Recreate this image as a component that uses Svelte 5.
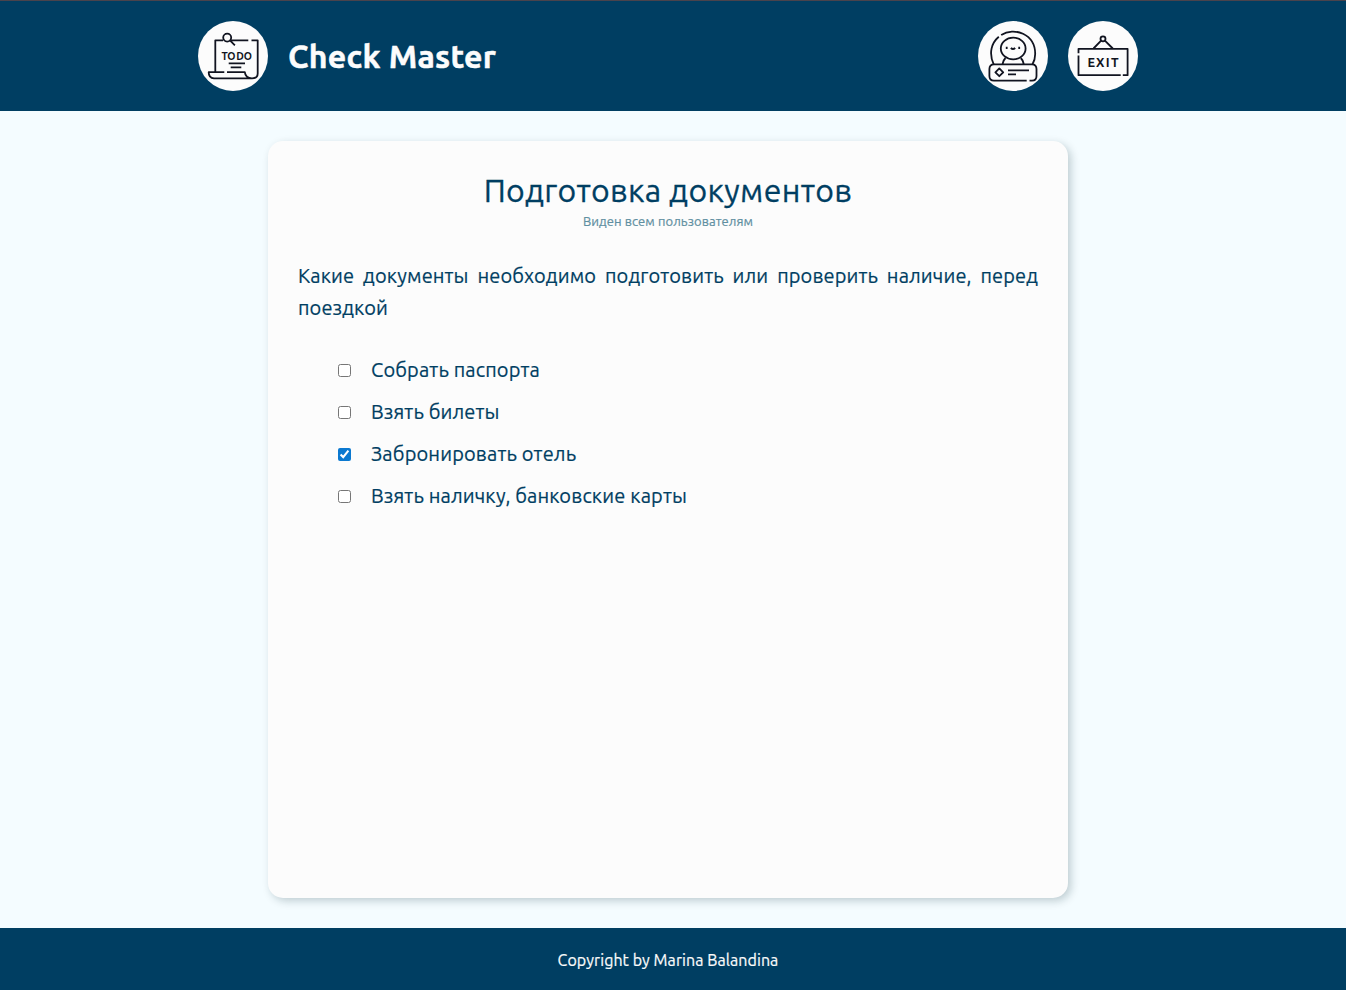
<script>
  let items = $state([
    { text: 'Собрать паспорта', done: false },
    { text: 'Взять билеты', done: false },
    { text: 'Забронировать отель', done: true },
    { text: 'Взять наличку, банковские карты', done: false }
  ]);
</script>

<div class="page">
  <header>
    <div class="bar">
      <a class="round" href="#home" aria-label="Check Master">
        <svg viewBox="0 0 70 70">
          <circle cx="29.2" cy="16.6" r="4" />
          <path d="M32.2 19.7L36.9 24.4M25 19.3H17.3V51M33 19.3H50.3M53.5 19.3H59.7V52.5Q59.7 57.3 54 57.3H16Q10.7 57 10.7 51.2H26.3M29 51.2H46.8Q47.5 57.3 54 57.3M30.7 42.3H47M32.7 46.3H43.3" />
          <text class="todo" y="38.8" x="23.5 29.2 38.3 45.8">TODO</text>
        </svg>
      </a>
      <h1>Check Master</h1>
      <a class="round profile" href="#profile" aria-label="Profile">
        <svg viewBox="0 0 70 70">
          <path d="M15.7 43.3C10.5 32 13.5 22 20.8 15.8M23.2 14C36 5.5 57.2 13 57.2 33Q57.2 38.5 54.5 43.3" />
          <ellipse cx="35.2" cy="27.5" rx="12.4" ry="10.8" />
          <path d="M27.5 37Q25 39.5 24.4 43.3M42.8 37Q45.3 39.5 45.9 43.3M48.7 59.7H16Q11.4 59.7 11.4 55V48Q11.4 43.3 16 43.3H54Q58.5 43.3 58.5 48V55Q58.5 59.7 54 59.7H51.5M21.3 47.4L25.2 51.3L21.3 55.2L17.4 51.3ZM30 49.3H51M30 53.4H38M32.8 27Q35 29 37.2 27M28.7 25.7V28M41.2 25.7V28" />
        </svg>
      </a>
      <a class="round" href="#exit" aria-label="Exit">
        <svg viewBox="0 0 70 70">
          <circle cx="35" cy="17.8" r="2.5" />
          <path d="M33.1 19.7L25.5 27.5M36.9 19.7L44.8 27.5M10.5 32.3V27.8H59.6V54.2H54.8M52.7 54.2H10.5V34.5" />
          <text class="exit" y="46.2" x="19.6 28 37.7 43">EXIT</text>
        </svg>
      </a>
    </div>
  </header>

  <main>
    <section>
      <h2>Подготовка документов</h2>
      <p class="access">Виден всем пользователям</p>
      <p class="about">Какие документы необходимо подготовить или проверить наличие, перед поездкой</p>
      <ul>
        {#each items as item}
          <li>
            <label>
              <input type="checkbox" bind:checked={item.done} />
              <span>{item.text}</span>
            </label>
          </li>
        {/each}
      </ul>
    </section>
  </main>

  <footer><span>Copyright by Marina Balandina</span></footer>
</div>

<style>
  :global(body) { margin: 0; }
  .page {
    box-sizing: border-box;
    height: 990px;
    display: flex;
    flex-direction: column;
    background: #f4fcff;
    color: #003e62;
    font-family: Ubuntu, "Noto Sans", sans-serif;
    -webkit-text-stroke: 0.2px currentColor;
  }
  h1, h2, p, ul { margin: 0; padding: 0; font-weight: 400; }
  header {
    box-sizing: border-box;
    height: 111px;
    flex: none;
    padding: 20px 10px 20px 0;
    border-top: 1px solid #4a434c;
    background: #003e62;
  }
  .bar { width: 940px; margin: 0 auto; display: flex; align-items: center; gap: 20px; }
  .round { width: 70px; height: 70px; flex: none; border-radius: 50%; background: #fcfcfc; overflow: hidden; }
  .profile { margin-left: auto; }
  svg { display: block; width: 70px; height: 70px; fill: none; stroke: #111420; stroke-width: 1.8; stroke-linejoin: round; }
  text { fill: #111420; stroke: none; -webkit-text-stroke: 0; font-family: Ubuntu, Roboto, sans-serif; font-weight: 700; }
  .todo { font-size: 10.4px; }
  .exit { font-size: 12.7px; }
  h1 { color: #fcfcfc; font-size: 32px; line-height: 40px; font-weight: 700; letter-spacing: 0.3px; -webkit-text-stroke-width: 0.5px; }
  main { flex: 1; display: flex; padding: 30px 10px 30px 0; }
  section {
    box-sizing: border-box;
    width: 800px;
    margin: 0 auto;
    padding: 29px 30px 30px;
    border-radius: 15px;
    background: #fcfcfc;
    box-shadow: 3px 3px 8px rgba(0, 40, 50, 0.22);
  }
  h2 { font-size: 32px; line-height: 41px; text-align: center; letter-spacing: 0.33px; -webkit-text-stroke-width: 0.3px; }
  .access { color: #5f8fa1; font-size: 13px; line-height: 20px; text-align: center; letter-spacing: 0.08px; }
  .about { margin-top: 29px; font-size: 20px; line-height: 32px; text-align: justify; letter-spacing: 0.12px; }
  ul { list-style: none; margin-top: 24px; padding-left: 40px; }
  li { height: 42px; }
  label { display: flex; align-items: center; height: 42px; gap: 20px; font-size: 20px; letter-spacing: 0.15px; }
  input { width: 13px; height: 13px; margin: 2px 0 0; flex: none; accent-color: #0b79d0; }
  footer {
    height: 62px;
    flex: none;
    display: flex;
    align-items: center;
    justify-content: center;
    padding-right: 10px;
    color: #fcfcfc;
    background: #003e62;
    font-size: 16px;
    letter-spacing: 0.07px;
  }
  footer span { padding-top: 2px; }
</style>
